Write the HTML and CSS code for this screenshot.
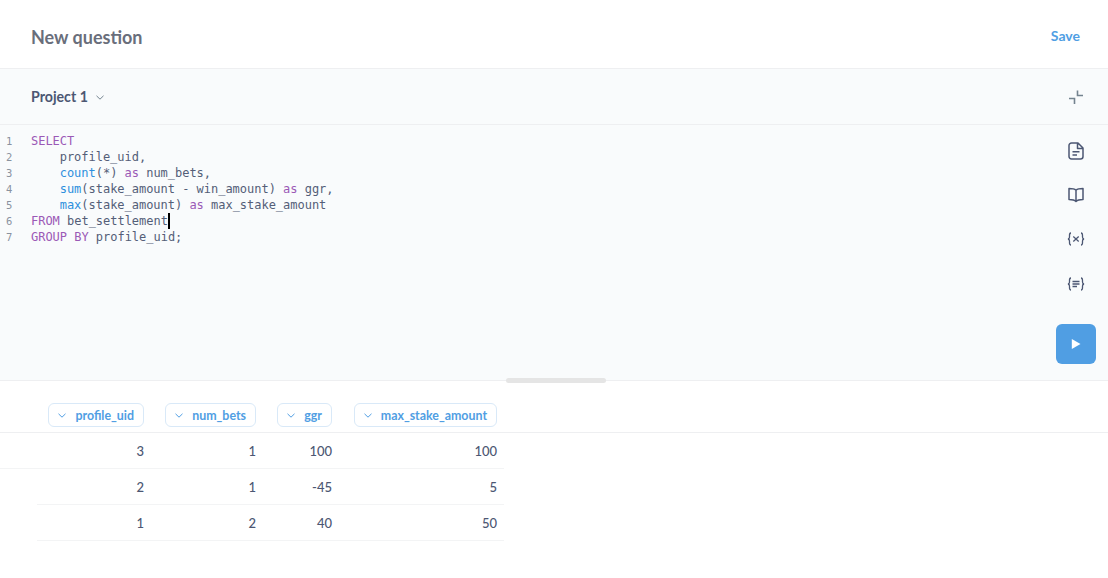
FILE: index.html
```html
<!DOCTYPE html>
<html lang="en">
<head>
<meta charset="utf-8">
<title>New question</title>
<link rel="stylesheet" href="styles.css">
</head>
<body>
<header class="top">
  <h1 class="title">New question</h1>
  <a class="save">Save</a>
</header>
<div class="dbbar">
  <div class="db">Project 1
    <svg class="chev" width="8" height="5" viewBox="0 0 8 5"><path d="M.5.8 4 4.2 7.5.8" fill="none" stroke="#74838f" stroke-width="1"/></svg>
  </div>
  <svg class="contract" width="14" height="14" viewBox="0 0 14 14"><path d="M8.5 0.5V5.5H14M0 8.5H5.5V14" fill="none" stroke="#74838f" stroke-width="1.6"/></svg>
</div>
<section class="editor">
  <div class="gutter"><div>1</div><div>2</div><div>3</div><div>4</div><div>5</div><div>6</div><div>7</div></div>
  <div class="code">
    <div class="line"><span class="kw">SELECT</span></div>
    <div class="line indent"><span>profile_uid,</span></div>
    <div class="line indent"><span class="fn">count</span><span>(*) </span><span class="kw">as</span><span> num_bets,</span></div>
    <div class="line indent"><span class="fn">sum</span><span>(stake_amount - win_amount) </span><span class="kw">as</span><span> ggr,</span></div>
    <div class="line indent"><span class="fn">max</span><span>(stake_amount) </span><span class="kw">as</span><span> max_stake_amount</span></div>
    <div class="line"><span class="kw">FROM</span><span> bet_settlement</span><span class="caret"></span></div>
    <div class="line"><span class="kw">GROUP BY</span><span> profile_uid;</span></div>
  </div>
  <aside class="tools">
    <svg class="tool" width="16" height="18" viewBox="0 0 16 18"><path d="M3.5 1H10L15 6V14.5A2.500 2.500 0 0 1 12.500 17H3.500A2.500 2.500 0 0 1 1 14.500V3.500A2.500 2.500 0 0 1 3.500 1ZM9.500 1V6.500H15M4.500 9.800H11.500M4.500 13H9" fill="none" stroke="#4c5773" stroke-width="1.500" stroke-linejoin="round"/></svg>
    <svg class="tool" width="16" height="16" viewBox="0 0 16 16"><path d="M8 3.200C6.500 1.800 3.500 1.500 1 1.500V12.500C3.500 12.500 6.500 12.800 8 14.500C9.500 12.800 12.500 12.500 15 12.500V1.500C12.500 1.500 9.500 1.800 8 3.200ZM8 3.200V14.500" fill="none" stroke="#4c5773" stroke-width="1.500" stroke-linejoin="round"/></svg>
    <svg class="tool" width="18" height="14" viewBox="0 0 18 14"><path d="M4 1C2.500 1 2.500 2 2.500 3.500V5C2.500 6 2 6.800 1 7C2 7.200 2.500 8 2.500 9V10.500C2.500 12 2.500 13 4 13M14 1C15.500 1 15.500 2 15.500 3.500V5C15.500 6 16 6.800 17 7C16 7.200 15.500 8 15.500 9V10.500C15.500 12 15.500 13 14 13M6.300 4.600 11.700 9.400M11.700 4.600 6.300 9.400" fill="none" stroke="#4c5773" stroke-width="1.300"/></svg>
    <svg class="tool" width="18" height="14" viewBox="0 0 18 14"><path d="M4 1C2.500 1 2.500 2 2.500 3.500V5C2.500 6 2 6.800 1 7C2 7.200 2.500 8 2.500 9V10.500C2.500 12 2.500 13 4 13M14 1C15.500 1 15.500 2 15.500 3.500V5C15.500 6 16 6.800 17 7C16 7.200 15.500 8 15.500 9V10.500C15.500 12 15.500 13 14 13M5.500 4.500H12.500M5.500 7H12.500M5.500 9.500H10" fill="none" stroke="#4c5773" stroke-width="1.300"/></svg>
    <button class="run"><svg width="10" height="10" viewBox="0 0 10 10"><path d="M.8 0 9.500 5 .8 10Z" fill="#fff"/></svg></button>
  </aside>
  <div class="handle"></div>
</section>
<main class="results">
  <div class="row head">
    <div class="cell c1"><span class="pill"><svg class="pchev" width="8" height="5" viewBox="0 0 8 5"><path d="M.5.8 4 4.200 7.500.8" fill="none" stroke="#509ee3" stroke-width="1"/></svg>profile_uid</span></div>
    <div class="cell c2"><span class="pill"><svg class="pchev" width="8" height="5" viewBox="0 0 8 5"><path d="M.5.8 4 4.200 7.500.8" fill="none" stroke="#509ee3" stroke-width="1"/></svg>num_bets</span></div>
    <div class="cell c3"><span class="pill"><svg class="pchev" width="8" height="5" viewBox="0 0 8 5"><path d="M.5.8 4 4.200 7.500.8" fill="none" stroke="#509ee3" stroke-width="1"/></svg>ggr</span></div>
    <div class="cell c4"><span class="pill"><svg class="pchev" width="8" height="5" viewBox="0 0 8 5"><path d="M.5.8 4 4.200 7.500.8" fill="none" stroke="#509ee3" stroke-width="1"/></svg>max_stake_amount</span></div>
  </div>
  <div class="row data"><div class="cell c1">3</div><div class="cell c2">1</div><div class="cell c3">100</div><div class="cell c4">100</div></div>
  <div class="row data inset"><div class="cell c1">2</div><div class="cell c2">1</div><div class="cell c3">-45</div><div class="cell c4">5</div></div>
  <div class="row data inset"><div class="cell c1">1</div><div class="cell c2">2</div><div class="cell c3">40</div><div class="cell c4">50</div></div>
</main>
</body>
</html>
```
FILE: styles.css
```css
* { box-sizing: border-box; }
html, body { margin: 0; height: 100%; }
body { font-family: Lato, sans-serif; color: #4c5773; background: #fff; overflow: hidden; }
.top { height: 69px; padding: 2px 28px 0 31px; display: flex; align-items: center; justify-content: space-between; border-bottom: 1px solid #eeeff1; }
.title { margin: 4px 0 0; font-size: 18px; font-weight: 700; color: #696e7b; }
.save { font-size: 14px; font-weight: 700; color: #509ee3; }
.dbbar { height: 56px; padding: 0 25px 0 31px; display: flex; align-items: center; justify-content: space-between; background: #f9fbfc; border-bottom: 1px solid #eeeff1; }
.db { font-size: 14.200px; font-weight: 700; display: flex; align-items: center; gap: 8px; }
.chev { margin-top: 2px; }
.editor { position: relative; height: 256px; background: #f9fbfc; border-bottom: 1px solid #eeeff1; display: flex; padding-top: 8px; }
.gutter { width: 31px; padding-left: 6px; font: 10.500px/16px "DejaVu Sans Mono", monospace; color: #8a929f; }
.code { flex: 1; font: 12px/16px "DejaVu Sans Mono", monospace; letter-spacing: -.02px; color: #545e78; }
.line { height: 16px; white-space: pre; }
.indent { padding-left: 28.700px; }
.kw { color: #9b59b6; }
.fn { color: #2d8fdd; }
.caret { display: inline-block; width: 2px; height: 16px; background: #000; vertical-align: top; }
.tools { width: 64px; margin-top: -8px; padding: 17px 0 16px; display: flex; flex-direction: column; align-items: center; }
.tool { flex: none; margin-bottom: 27px; }
.tool:nth-child(2) { margin-bottom: 29px; }
.tool:nth-child(3) { margin-bottom: 31px; }
.run { margin-top: auto; width: 40px; height: 40px; border: 0; padding: 0; background: #509ee3; border-radius: 6px; display: flex; align-items: center; justify-content: center; }
.handle { position: absolute; left: 506px; bottom: -3px; width: 100px; height: 5px; border-radius: 3px; background: #e5e5e5; }
.row { display: flex; }
.head { height: 52px; align-items: flex-end; padding-bottom: 5px; border-bottom: 1px solid #eeeff1; }
.data { height: 36px; align-items: center; width: 504px; border-bottom: 1px solid #f3f4f5; }
.inset { margin-left: 37px; width: 467px; }
.cell { flex: none; text-align: right; font-size: 13px; font-weight: 500; }
.c1 { width: 144px; }
.inset .c1 { width: 107px; }
.c2 { width: 112px; }
.c3 { width: 76px; }
.c4 { width: 165px; }
.head .cell { display: flex; justify-content: flex-end; }
.pill { height: 24px; display: inline-flex; align-items: center; padding: 0 9px; border: 1px solid #d9e9f8; border-radius: 6px; color: #509ee3; font-size: 12.400px; font-weight: 700; background: #fff; }
.pchev { margin-right: 9px; }
```
